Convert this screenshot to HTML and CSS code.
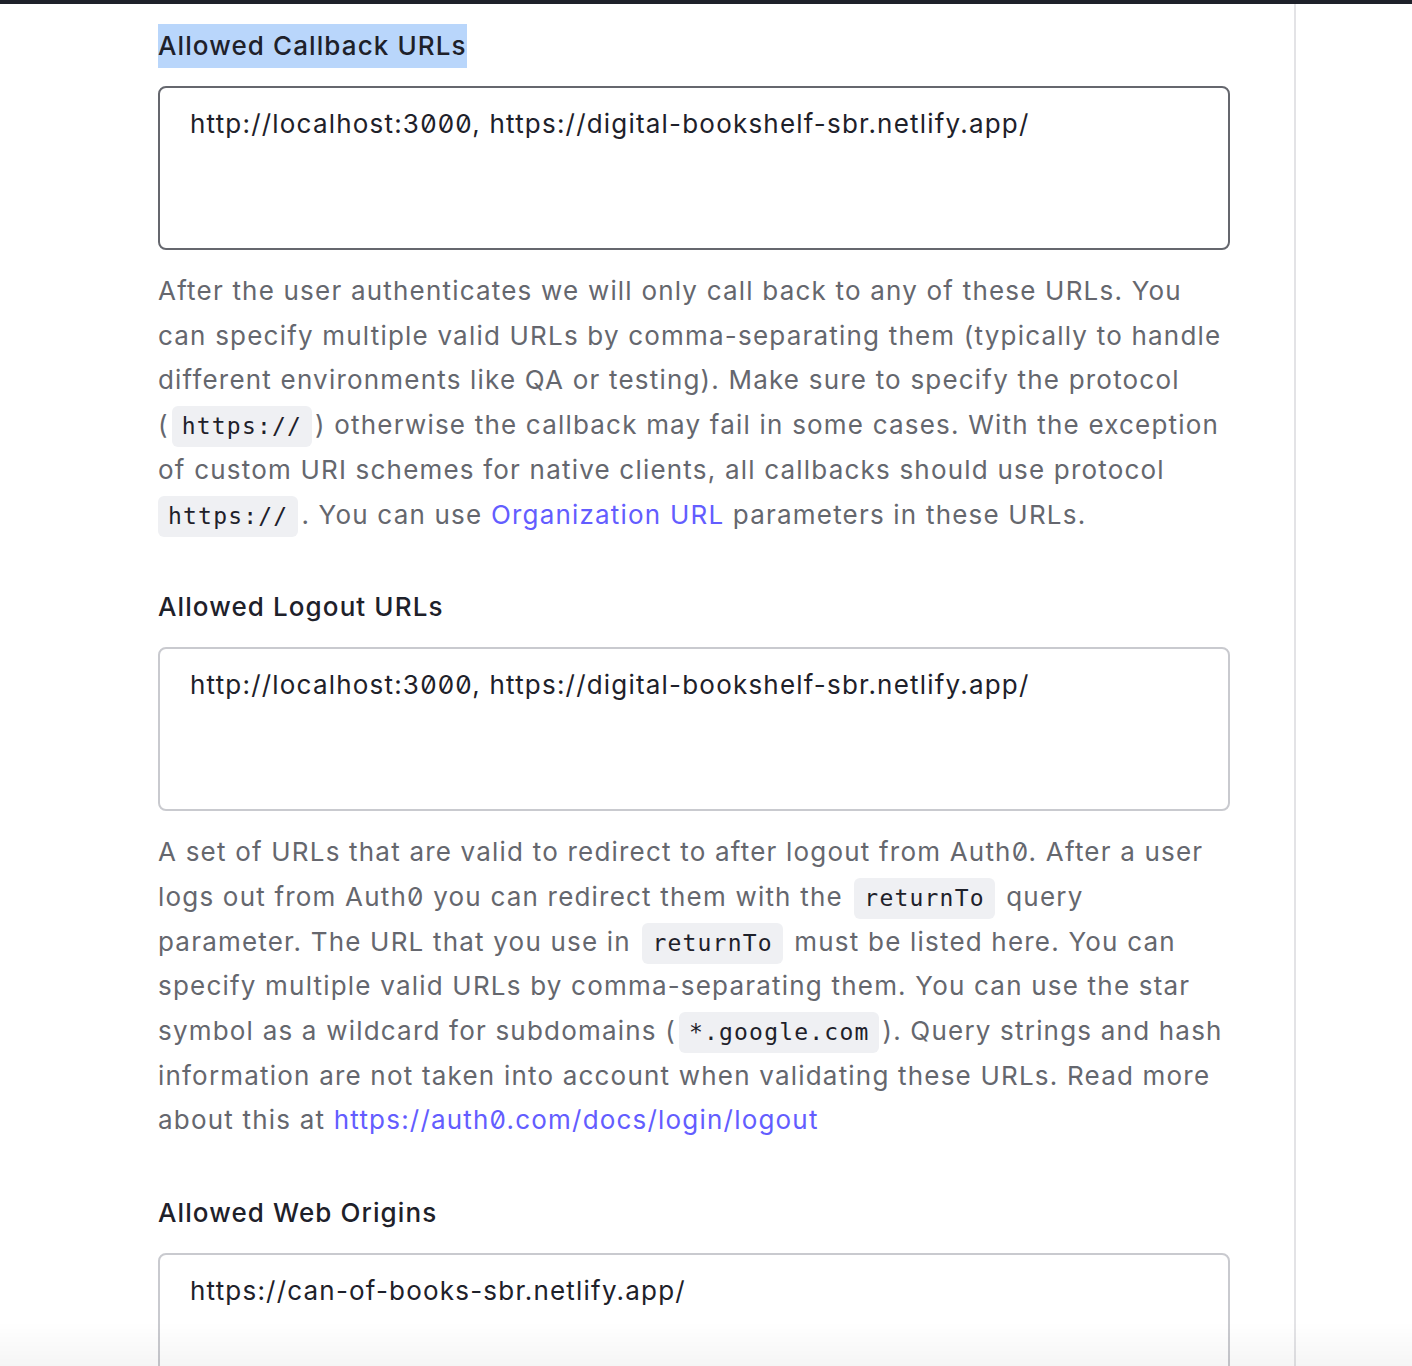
FILE: index.html
```html
<!DOCTYPE html>
<html lang="en">
<head>
<meta charset="utf-8">
<title>Application URIs</title>
<link rel="stylesheet" href="styles.css">
</head>
<body>
<div class="topbar"></div>
<div class="layout">
  <main class="main">
    <section class="field">
      <label class="label"><span class="selected">Allowed Callback URLs</span></label>
      <div class="textarea focused">http://localhost:3000, https://digital-bookshelf-sbr.netlify.app/</div>
      <p class="help">After the user authenticates we will only call back to any of these URLs. You can specify multiple valid URLs by comma-separating them (typically to handle different environments like QA or testing). Make sure to specify the protocol (<code class="code">https://</code>) otherwise the callback may fail in some cases. With the exception of custom URI schemes for native clients, all callbacks should use protocol <code class="code first">https://</code>. You can use <a class="link" href="#">Organization URL</a> parameters in these URLs.</p>
    </section>
    <section class="field">
      <label class="label">Allowed Logout URLs</label>
      <div class="textarea">http://localhost:3000, https://digital-bookshelf-sbr.netlify.app/</div>
      <p class="help">A set of URLs that are valid to redirect to after logout from Auth0. After a user logs out from Auth0 you can redirect them with the <code class="code">returnTo</code> query parameter. The URL that you use in <code class="code">returnTo</code> must be listed here. You can specify multiple valid URLs by comma-separating them. You can use the star symbol as a wildcard for subdomains (<code class="code">*.google.com</code>). Query strings and hash information are not taken into account when validating these URLs. Read more about this at <a class="link" href="#">https://auth0.com/docs/login/logout</a></p>
    </section>
    <section class="field">
      <label class="label">Allowed Web Origins</label>
      <div class="textarea">https://can-of-books-sbr.netlify.app/</div>
    </section>
  </main>
  <aside class="side"></aside>
</div>
<div class="fade"></div>
</body>
</html>
```
FILE: styles.css
```css
html, body {
  margin: 0;
  padding: 0;
  height: 100%;
  overflow: hidden;
  background: #ffffff;
}
body {
  font-family: Inter, "Noto Sans", sans-serif;
  font-feature-settings: "zero" 1;
  letter-spacing: 1.2px;
  color: #1e212a;
}
.topbar {
  height: 4px;
  background: #1e212a;
}
.layout {
  display: flex;
  height: calc(100% - 4px);
}
.main {
  width: 1072px;
  flex: none;
  padding: 20px 64px 0 158px;
  border-right: 2px solid #e3e3e6;
}
.side {
  flex: 1;
}
.field {
  display: flex;
  flex-direction: column;
  align-items: flex-start;
  margin-bottom: 48px;
}
.label {
  display: block;
  font-size: 26px;
  font-weight: 500;
  line-height: 44px;
  height: 44px;
  letter-spacing: 1.1px;
  color: #1e212a;
  margin-bottom: 18px;
}
.selected {
  background: #b9d6fb;
  display: inline-block;
  vertical-align: top;
}
.textarea {
  box-sizing: border-box;
  width: 1072px;
  height: 164px;
  border: 2px solid #c9cacf;
  border-radius: 8px;
  padding: 14px 30px;
  font-size: 26px;
  line-height: 44px;
  color: #1e212a;
}
.textarea.focused {
  border-color: #65676e;
}
.help {
  margin: 19px 0 0;
  font-size: 26px;
  line-height: 44.7px;
  color: #65676e;
}
.code {
  font-family: "DejaVu Sans Mono", "Liberation Mono", monospace;
  font-size: 23px;
  line-height: 1;
  color: #1e212a;
  background: #eff0f3;
  border-radius: 6px;
  padding: 7px 10px 8px;
  margin: 0 3px;
}
.code.first {
  margin-left: 0;
}
.link {
  color: #635dff;
  text-decoration: none;
}
.fade {
  position: fixed;
  left: 0;
  right: 0;
  bottom: 0;
  height: 44px;
  background: linear-gradient(to bottom, rgba(0,0,0,0), rgba(0,0,0,0.04));
  pointer-events: none;
}
```
